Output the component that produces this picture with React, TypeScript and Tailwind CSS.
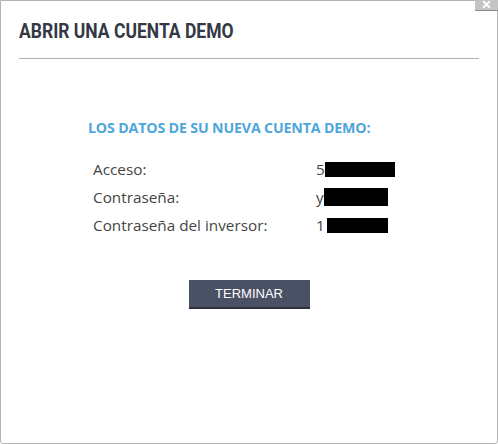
import { X } from 'lucide-react';

const rows = [
  { label: 'Acceso:', first: '5', mask: 'w-[70px] h-[15px]' },
  { label: 'Contraseña:', first: 'y', mask: 'w-[64px] h-[18px]' },
  { label: 'Contraseña del inversor:', first: '1', mask: 'ml-[2px] w-[61px] h-[15px]' },
];

export default function App() {
  return (
    <div className="relative w-[498px] h-[444px] bg-white overflow-hidden">
      {/* dialog frame */}
      <div className="absolute inset-0 border border-[#b3b3b3] rounded-b-[3px]" />
      {/* close tab */}
      <div className="absolute top-0 right-0 w-[23px] h-[11px] bg-[#c4c4c4] border-b border-[#8a8a8a] flex items-start justify-center">
        <X size={11} strokeWidth={4} className="text-white -mt-[1px]" />
      </div>

      <div className="relative flex flex-col px-[19px] pt-[18px]">
        <h1 className="self-start origin-left scale-x-[0.875] text-[20px] leading-[26px] font-bold text-[#323844] whitespace-nowrap font-['Roboto',sans-serif]">
          ABRIR UNA CUENTA DEMO
        </h1>
        <div className="mt-[14px] h-px w-[460px] bg-[#b0b0b0]" />

        <div className="flex flex-col pl-[69px] pt-[60px] font-['Open_Sans','Noto_Sans',sans-serif]">
          <p className="text-[14.2px] leading-[18px] font-bold text-[#4ea6dc] tracking-[-0.15px] whitespace-nowrap">
            LOS DATOS DE SU NUEVA CUENTA DEMO:
          </p>
          <div className="mt-[18px] pl-[5px] flex flex-col">
            {rows.map((r) => (
              <div key={r.label} className="flex items-center h-[28px] text-[15.3px] text-[#454545]">
                <span className="w-[223px]">{r.label}</span>
                <span>{r.first}</span>
                <span className={`bg-black ${r.mask}`} />
              </div>
            ))}
          </div>
        </div>

        <div className="flex justify-center pt-[41px]">
          <button className="w-[121px] h-[29px] bg-[#4b5165] border-b-2 border-[#2e3240] text-white text-[13px] font-['Liberation_Sans',Arial,sans-serif]">
            TERMINAR
          </button>
        </div>
      </div>
    </div>
  );
}
